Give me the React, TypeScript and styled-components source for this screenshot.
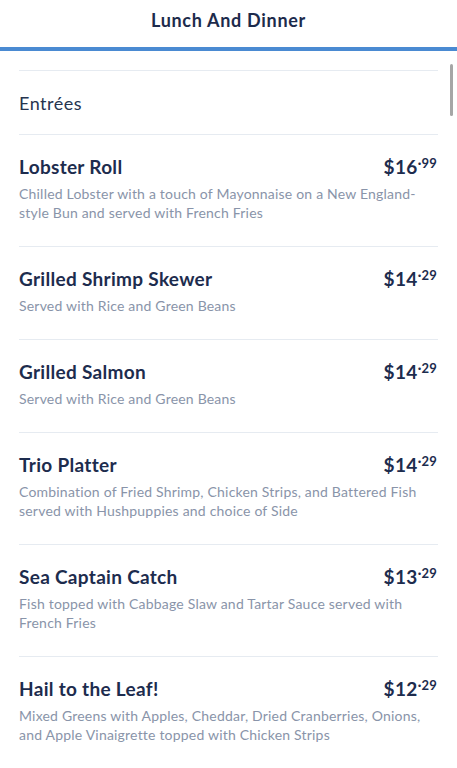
import React from 'react';
import styled, { createGlobalStyle } from 'styled-components';

interface MenuItem {
  name: string;
  dollars: string;
  cents: string;
  description: string;
}

const ITEMS: MenuItem[] = [
  {
    name: 'Lobster Roll',
    dollars: '$16',
    cents: '99',
    description: 'Chilled Lobster with a touch of Mayonnaise on a New England-style Bun and served with French Fries',
  },
  { name: 'Grilled Shrimp Skewer', dollars: '$14', cents: '29', description: 'Served with Rice and Green Beans' },
  { name: 'Grilled Salmon', dollars: '$14', cents: '29', description: 'Served with Rice and Green Beans' },
  {
    name: 'Trio Platter',
    dollars: '$14',
    cents: '29',
    description:
      'Combination of Fried Shrimp, Chicken Strips, and Battered Fish served with Hushpuppies and choice of Side',
  },
  {
    name: 'Sea Captain Catch',
    dollars: '$13',
    cents: '29',
    description: 'Fish topped with Cabbage Slaw and Tartar Sauce served with French Fries',
  },
  {
    name: 'Hail to the Leaf!',
    dollars: '$12',
    cents: '29',
    description:
      'Mixed Greens with Apples, Cheddar, Dried Cranberries, Onions, and Apple Vinaigrette topped with Chicken Strips',
  },
];

const GlobalStyle = createGlobalStyle`
  html, body {
    margin: 0;
    padding: 0;
    background: #ffffff;
    overflow: hidden;
  }
  body {
    font-family: Lato, "Noto Sans", sans-serif;
    -webkit-font-smoothing: antialiased;
  }
  * { box-sizing: border-box; }
`;

function App() {
  return (
    <Screen>
      <GlobalStyle />
      <Header>
        <HeaderTitle>Lunch And Dinner</HeaderTitle>
      </Header>
      <Body>
        <ScrollThumb />
        <List>
          <SectionRow>Entrées</SectionRow>
          {ITEMS.map((item) => (
            <ItemRow key={item.name}>
              <ItemTop>
                <ItemName>{item.name}</ItemName>
                <Price>
                  {item.dollars}
                  <Cents>·{item.cents}</Cents>
                </Price>
              </ItemTop>
              <ItemDesc>{item.description}</ItemDesc>
            </ItemRow>
          ))}
        </List>
      </Body>
    </Screen>
  );
}

const Screen = styled.div`
  width: 457px;
  height: 768px;
  display: flex;
  flex-direction: column;
  background: #ffffff;
  overflow: hidden;
`;

const Header = styled.header`
  height: 51px;
  flex-shrink: 0;
  display: flex;
  align-items: center;
  justify-content: center;
  padding-bottom: 7px;
  border-bottom: 4px solid #4a8ad2;
`;

const HeaderTitle = styled.h1`
  margin: 0;
  font-size: 18px;
  font-weight: 700;
  color: #1d2b4c;
  letter-spacing: 0.7px;
`;

const Body = styled.div`
  position: relative;
  flex: 1;
  overflow: hidden;
`;

const ScrollThumb = styled.div`
  position: absolute;
  top: 13px;
  right: 4px;
  width: 3px;
  height: 52px;
  border-radius: 2px;
  background: #a6a6a6;
`;

const List = styled.div`
  padding: 19px 19px 0 19px;
  display: flex;
  flex-direction: column;
`;

const SectionRow = styled.div`
  border-top: 1px solid #e6ebf1;
  padding: 20px 0 19px;
  line-height: 24px;
  font-size: 18px;
  font-weight: 400;
  color: #26344f;
  letter-spacing: 0.5px;
`;

const ItemRow = styled.div`
  border-top: 1px solid #e6ebf1;
  padding: 19px 0 24px;
`;

const ItemTop = styled.div`
  display: flex;
  justify-content: space-between;
  align-items: center;
  height: 24px;
`;

const ItemName = styled.div`
  font-size: 19px;
  font-weight: 700;
  color: #1d2c4e;
  letter-spacing: 0.3px;
`;

const Price = styled.div`
  font-size: 19px;
  font-weight: 700;
  color: #1d2c4e;
  display: flex;
  align-items: flex-start;
  letter-spacing: 0.4px;
  margin-right: 1px;
`;

const Cents = styled.span`
  font-size: 13px;
  line-height: 14px;
  margin-top: 1px;
  letter-spacing: 0.2px;
`;

const ItemDesc = styled.p`
  margin: 6px 0 0;
  padding-right: 10px;
  font-size: 14px;
  line-height: 19px;
  color: #8994a9;
  letter-spacing: 0.2px;
`;

export default App;
